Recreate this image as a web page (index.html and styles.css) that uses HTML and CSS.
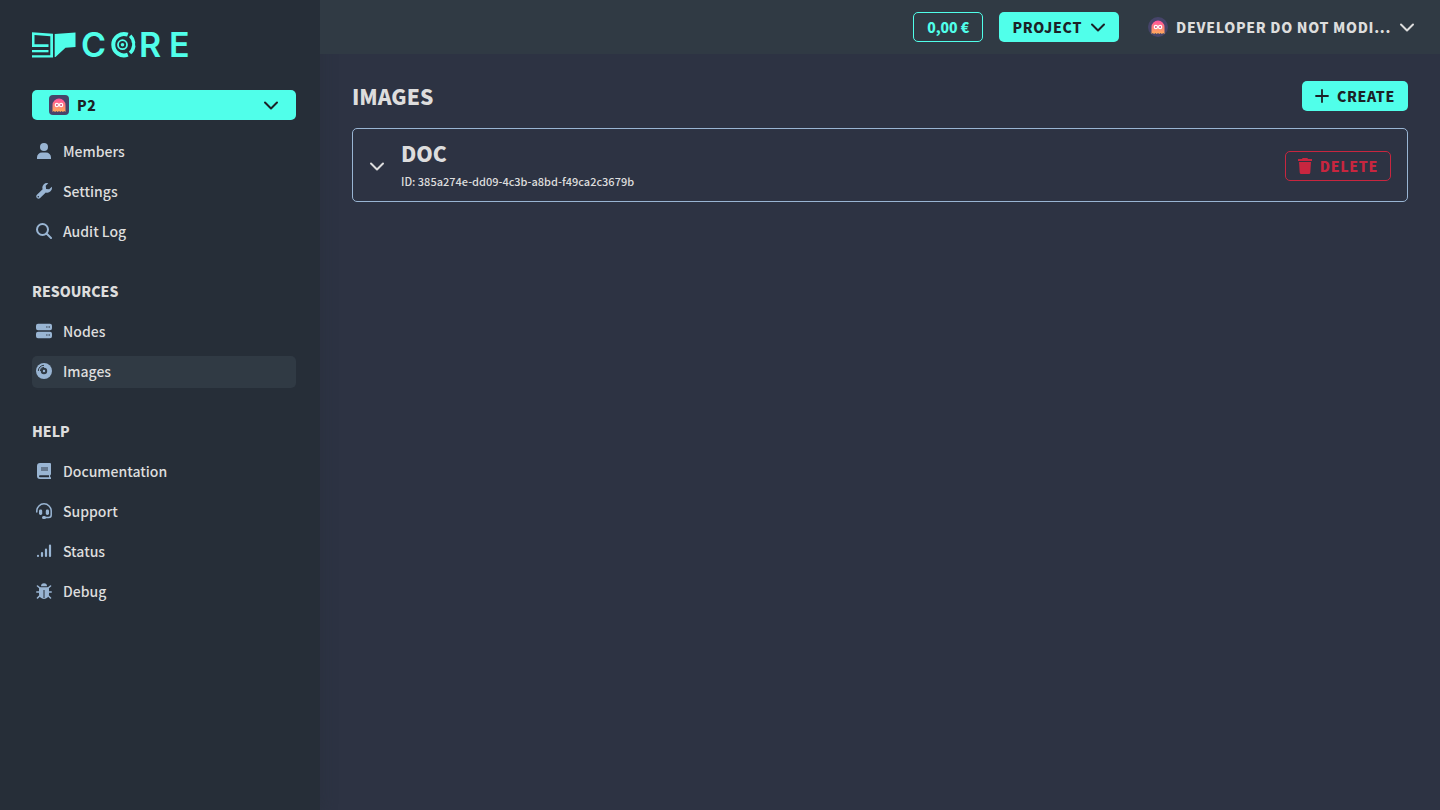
FILE: index.html
```html
<!DOCTYPE html>
<html lang="en">
<head>
<meta charset="utf-8">
<meta name="viewport" content="width=device-width, initial-scale=1">
<title>Images - Core</title>
<link rel="stylesheet" href="styles.css">
</head>
<body>
<svg class="sprite" aria-hidden="true">
  <defs>
    <linearGradient id="ghost-fill" x1="0" y1="0" x2="0" y2="1">
      <stop offset="0" stop-color="#ff4fa0"/>
      <stop offset="1" stop-color="#ffae58"/>
    </linearGradient>
    <symbol id="ghost" viewBox="0 0 20 20">
      <path fill="url(#ghost-fill)" d="M3.500 17V10a6.500 6.500 0 0 1 13 0v7l-1.300-1-1.300 1-1.300-1-1.300 1-1.300-1-1.300 1-1.300-1-1.300 1-1.300-1z"/>
      <circle cx="7.900" cy="10" r="1.600" fill="#d94f86" stroke="#fff" stroke-width="1.200"/>
      <circle cx="12.100" cy="10" r="1.600" fill="#d94f86" stroke="#fff" stroke-width="1.200"/>
    </symbol>
    <symbol id="chevron" viewBox="0 0 16 16">
      <path d="M2 5.500l6 6 6-6" fill="none" stroke="currentColor" stroke-width="2" stroke-linecap="round" stroke-linejoin="round"/>
    </symbol>
  </defs>
</svg>
<div class="app">
  <aside class="sidebar">
    <a class="logo" href="#" aria-label="Core home">
      <svg width="160" height="26" viewBox="0 0 160 26" fill="currentColor">
        <path d="M0 .2L21 1.700V25.500H0V23.200H18.300V4.200L2.500 2.900V12.300H16.500V15H0z"/>
        <path d="M0 18h16.500v2.300H0z"/>
        <path d="M22.700 2L43.500 .5V15L33.500 15.700L23.500 25H22.700z"/>
        <text class="logo-letter" x="49" y="25">C</text>
        <path d="M95.800 2.700A10.700 10.700 0 1 0 95.800 22.700" fill="none" stroke="currentColor" stroke-width="4"/>
        <path d="M98.200 3.800A11.500 11.500 0 0 1 101.600 10.700M101.800 13.500A11.500 11.500 0 0 1 98 21" fill="none" stroke="currentColor" stroke-width="3.500"/>
        <path d="M101.600 10v4" stroke="currentColor" stroke-width="3"/>
        <circle cx="90.500" cy="12.700" r="4.500" fill="none" stroke="currentColor" stroke-width="1.800"/>
        <circle cx="90.500" cy="12.700" r="1.800"/>
        <text class="logo-letter" x="107" y="25">R</text>
        <text class="logo-letter" x="137" y="25">E</text>
      </svg>
    </a>
    <button class="btn btn-primary project-select" type="button">
      <svg class="avatar" viewBox="0 0 20 20"><use href="#ghost"/></svg>
      <span>P2</span>
      <svg class="icon end" viewBox="0 0 16 16"><use href="#chevron"/></svg>
    </button>
    <nav class="nav">
      <div class="group">
        <a class="item" href="#"><svg class="icon" viewBox="0 0 16 16"><circle cx="8" cy="4" r="4"/><path d="M1 16v-1.500A5 5 0 0 1 6 9.500h4a5 5 0 0 1 5 5V16z"/></svg>Members</a>
        <a class="item" href="#"><svg class="icon" viewBox="0 0 16 16"><path fill-rule="evenodd" d="M15.800 3.700a4.700 4.700 0 0 1-6 5.700l-5.900 5.900a2.300 2.300 0 0 1-3.200-3.200l5.900-5.900a4.700 4.700 0 0 1 5.700-6L9.700 2.800l.4 3.100 3.100.4zM2.300 12.900a.8.8 0 1 0 0 1.600.8.8 0 0 0 0-1.600z"/></svg>Settings</a>
        <a class="item" href="#"><svg class="icon" viewBox="0 0 16 16"><g fill="none" stroke="currentColor" stroke-width="2"><circle cx="6.500" cy="6.500" r="5.500"/><path d="M10.500 10.500l4.500 4.500" stroke-linecap="round"/></g></svg>Audit Log</a>
      </div>
      <div class="group">
        <h2 class="heading">RESOURCES</h2>
        <a class="item" href="#"><svg class="icon" viewBox="0 0 16 16"><path fill-rule="evenodd" d="M2 .8h12a2 2 0 0 1 2 2v2.400a2 2 0 0 1-2 2H2a2 2 0 0 1-2-2V2.800a2 2 0 0 1 2-2zM10.200 3.500v1H11.500v-1zm2.300 0v1h1.500v-1zM2 8.800h12a2 2 0 0 1 2 2v2.400a2 2 0 0 1-2 2H2a2 2 0 0 1-2-2v-2.400a2 2 0 0 1 2-2zm8.200 2.700v1h1.300v-1zm2.300 0v1h1.500v-1z"/></svg>Nodes</a>
        <a class="item active" href="#" aria-current="page"><svg class="icon" viewBox="0 0 16 16"><circle cx="8" cy="8" r="8"/><g class="cutout"><circle cx="8" cy="8" r="2.200"/><path d="M2.300 8A5.700 5.700 0 0 1 8 2.300M4.300 8A3.700 3.700 0 0 1 8 4.300"/></g></svg>Images</a>
      </div>
      <div class="group">
        <h2 class="heading">HELP</h2>
        <a class="item" href="#"><svg class="icon" viewBox="0 0 16 16"><path fill-rule="evenodd" d="M4 0h10a1 1 0 0 1 1 1v10a1 1 0 0 1-.8 1v2.200H15V16H4a3 3 0 0 1-3-3V3a3 3 0 0 1 3-3zM4 12.200a1 1 0 0 0 0 2h9v-2z"/><path d="M5 4h7v4H5z" fill="#66798f"/></svg>Documentation</a>
        <a class="item" href="#"><svg class="icon" viewBox="0 0 16 16"><path d="M.8 9V8a7.200 7.200 0 0 1 14.400 0v4a2.500 2.500 0 0 1-2.500 2.500H8.500" fill="none" stroke="currentColor" stroke-width="1.500" stroke-linecap="round"/><rect x="3" y="6.500" width="3.200" height="5.500" rx="1.400"/><rect x="9.800" y="6.500" width="3.200" height="5.500" rx="1.400"/><rect x="6" y="13" width="4" height="3" rx="1.500"/></svg>Support</a>
        <a class="item" href="#"><svg class="icon" viewBox="0 0 16 16"><path d="M2 12.900v.1M6 10v3M10 6.500V13M14 2.500V13" fill="none" stroke="currentColor" stroke-width="2.200" stroke-linecap="round"/></svg>Status</a>
        <a class="item" href="#"><svg class="icon" viewBox="0 0 16 16"><path d="M5 3.200a3 3 0 0 1 6 0zM4.500 4.300h7A1.500 1.500 0 0 1 13 6v5a5 5 0 0 1-10 0V6a1.500 1.500 0 0 1 1.500-1.700z"/><path d="M1.500 3l3 2.500M14.500 3l-3 2.500M.8 9h3M12.200 9h3M1.500 15l3-3M14.500 15l-3-3" fill="none" stroke="currentColor" stroke-width="1.600" stroke-linecap="round"/><path class="seam" d="M8 7v8"/></svg>Debug</a>
      </div>
    </nav>
  </aside>
  <div class="page">
    <header class="topbar">
      <button class="btn btn-outline balance" type="button">0,00 €</button>
      <button class="btn btn-primary" type="button">PROJECT<svg class="icon" viewBox="0 0 16 16"><use href="#chevron"/></svg></button>
      <button class="btn account" type="button">
        <svg class="avatar round" viewBox="0 0 20 20"><use href="#ghost"/></svg>
        <span class="account-name">DEVELOPER DO NOT MODI...</span>
        <svg class="icon" viewBox="0 0 16 16"><use href="#chevron"/></svg>
      </button>
    </header>
    <main class="content">
      <div class="title-row">
        <h1 class="title">IMAGES</h1>
        <button class="btn btn-primary" type="button"><svg class="icon small" viewBox="0 0 14 14"><path d="M7 1v12M1 7h12" stroke="currentColor" stroke-width="1.800" stroke-linecap="round"/></svg>CREATE</button>
      </div>
      <section class="card">
        <button class="toggle" type="button" aria-label="Expand DOC"><svg class="icon" viewBox="0 0 16 16"><use href="#chevron"/></svg></button>
        <div class="card-text">
          <h2 class="title">DOC</h2>
          <p class="card-id">ID: 385a274e-dd09-4c3b-a8bd-f49ca2c3679b</p>
        </div>
        <button class="btn btn-danger" type="button"><svg class="icon trash" viewBox="0 0 14 16"><path d="M0 1h4l.6-1h4.800L10 1h4v2H0zM1 4h12l-.7 10.500a1.600 1.600 0 0 1-1.600 1.500H3.300a1.600 1.600 0 0 1-1.600-1.500z"/></svg>DELETE</button>
      </section>
    </main>
  </div>
</div>
</body>
</html>
```

FILE: styles.css
```css
* { box-sizing: border-box; }

body {
  margin: 0;
  background: #2d3343;
  color: #dddddd;
  font-family: "Noto Sans CJK SC", "Noto Sans", sans-serif;
  font-size: 14px;
  line-height: 20px;
  font-weight: 500;
}

h1, h2, p { margin: 0; }

button {
  font: inherit;
  color: inherit;
  background: none;
  border: 0;
  padding: 0;
  cursor: pointer;
}

.sprite { position: absolute; width: 0; height: 0; }

.app { display: flex; min-height: 100vh; }

.sidebar {
  flex: 0 0 320px;
  padding: 32px 24px 32px 32px;
  background: #262e38;
  box-shadow: 0 0 16px rgba(38, 46, 56, 0.4);
}

.logo { display: block; height: 26px; color: #50ffea; }
.logo svg { display: block; overflow: visible; }
.logo-letter { font-family: Inter, sans-serif; font-size: 34px; font-weight: 600; }

.icon { flex: none; width: 16px; height: 16px; fill: currentColor; }
.icon.small { width: 14px; height: 14px; }
.icon.trash { width: 14px; }

.avatar {
  flex: none;
  width: 20px;
  height: 20px;
  border-radius: 4px;
  background: #46446a;
}
.avatar.round { border-radius: 50%; }

.btn {
  display: flex;
  align-items: center;
  gap: 8px;
  height: 30px;
  padding: 0 12px;
  border: 1px solid transparent;
  border-radius: 5px;
  font-weight: 900;
  letter-spacing: 0.05em;
  white-space: nowrap;
}
.btn-primary { background: #50ffea; color: #1c2126; }
.btn-outline { border-color: #50ffea; color: #50ffea; }
.btn-danger { border-color: #c8263f; color: #c8263f; }
.balance { padding: 0 13px; letter-spacing: normal; }

.project-select { width: 264px; margin-top: 32px; padding: 0 16px; }
.end { margin-left: auto; }

.nav {
  display: flex;
  flex-direction: column;
  gap: 28px;
  width: 264px;
  margin-top: 16px;
}
.group { display: flex; flex-direction: column; gap: 8px; }

.item, .heading {
  display: flex;
  align-items: center;
  height: 32px;
  padding-bottom: 2px;
}
.item {
  gap: 11px;
  padding-left: 4px;
  border-radius: 5px;
  color: inherit;
  text-decoration: none;
}
.item .icon { color: #99b5d3; }
.item.active { background: #303a44; }
.heading { font-size: 14px; font-weight: 900; }

.cutout path { fill: none; stroke: #303a44; stroke-width: 1; }
.cutout circle { fill: #99b5d3; stroke: #303a44; stroke-width: 2; }
.seam { stroke: #262e38; stroke-width: 1; }

.page { flex: 1; min-width: 0; }

.topbar {
  display: flex;
  justify-content: flex-end;
  gap: 16px;
  padding: 12px;
  background: #303a44;
}

.content { padding: 27px 32px; }
.title-row {
  display: flex;
  align-items: center;
  justify-content: space-between;
  margin-bottom: 17px;
}
.title { font-size: 21px; line-height: 30px; font-weight: 900; }

.card {
  display: flex;
  align-items: center;
  gap: 16px;
  padding: 9px 16px 7px;
  border: 1px solid #99b5d3;
  border-radius: 5px;
}
.toggle { display: flex; }
.card-text { flex: 1; min-width: 0; }
.card-id { font-size: 11px; line-height: 26px; }
```
